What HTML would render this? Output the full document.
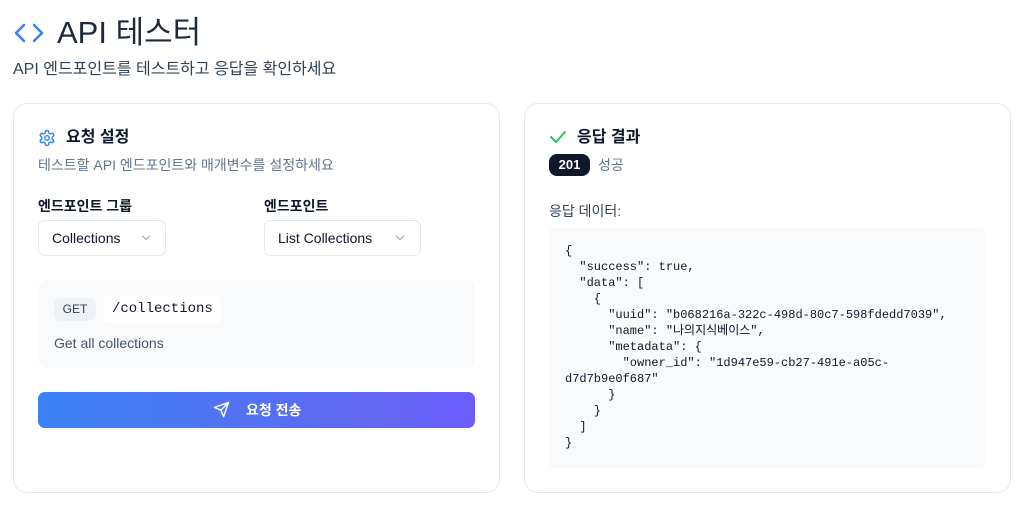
<!DOCTYPE html>
<html><head><meta charset="utf-8"><style>
*{box-sizing:border-box;margin:0;padding:0}
body{width:1027px;height:510px;background:#fff;font-family:"Liberation Sans","Noto Sans CJK KR",sans-serif;color:#0f172a;position:relative;overflow:hidden}
.abs{position:absolute}
.card{position:absolute;top:103px;width:487px;height:390px;border:1px solid #e2e8f0;border-radius:14px;background:#fff}
.sel{position:absolute;top:220px;height:36px;border:1px solid #e2e8f0;border-radius:7px;font-size:14px;line-height:34px;padding-left:13px;color:#0f172a}
.chev{position:absolute;top:12px;width:6px;height:6px;border-right:1.3px solid #94a3b8;border-bottom:1.3px solid #94a3b8;transform:rotate(45deg)}
pre{font-family:"Liberation Mono","Noto Sans CJK KR",monospace;font-size:12px;line-height:16px;color:#0f172a}
</style></head><body>
<svg class="abs" style="left:13px;top:20px" width="32" height="26" viewBox="0 0 32 26"><path d="M11 5 L3 13 L11 21 M21 5 L29 13 L21 21" fill="none" stroke="#3b82f6" stroke-width="2.6" stroke-linecap="round" stroke-linejoin="round"/></svg>
<div class="abs" style="left:57px;top:14px;font-size:31px;line-height:38px;color:#1e293b">API 테스터</div>
<div class="abs" style="left:13px;top:59px;font-size:16px;line-height:22px;color:#334155">API 엔드포인트를 테스트하고 응답을 확인하세요</div>

<div class="card" style="left:13px"></div>
<svg class="abs" style="left:38px;top:129px" width="18" height="18" viewBox="0 0 24 24" fill="none" stroke="#3b82f6" stroke-width="2" stroke-linecap="round" stroke-linejoin="round"><path d="M12.22 2h-.44a2 2 0 0 0-2 2v.18a2 2 0 0 1-1 1.73l-.43.25a2 2 0 0 1-2 0l-.15-.08a2 2 0 0 0-2.73.73l-.22.38a2 2 0 0 0 .73 2.730l.15.1a2 2 0 0 1 1 1.72v.51a2 2 0 0 1-1 1.74l-.15.09a2 2 0 0 0-.73 2.73l.22.38a2 2 0 0 0 2.73.73l.15-.08a2 2 0 0 1 2 0l.43.25a2 2 0 0 1 1 1.73V20a2 2 0 0 0 2 2h.44a2 2 0 0 0 2-2v-.18a2 2 0 0 1 1-1.73l.43-.25a2 2 0 0 1 2 0l.15.08a2 2 0 0 0 2.73-.73l.22-.39a2 2 0 0 0-.73-2.73l-.15-.08a2 2 0 0 1-1-1.74v-.5a2 2 0 0 1 1-1.74l.15-.09a2 2 0 0 0 .73-2.73l-.22-.38a2 2 0 0 0-2.73-.73l-.15.08a2 2 0 0 1-2 0l-.43-.25a2 2 0 0 1-1-1.73V4a2 2 0 0 0-2-2z"/><circle cx="12" cy="12" r="3"/></svg>
<div class="abs" style="left:66px;top:127px;font-size:16px;line-height:22px;font-weight:bold;color:#0f172a">요청 설정</div>
<div class="abs" style="left:38px;top:155px;font-size:14px;line-height:20px;color:#64748b">테스트할 API 엔드포인트와 매개변수를 설정하세요</div>
<div class="abs" style="left:38px;top:196px;font-size:14px;line-height:20px;font-weight:bold">엔드포인트 그룹</div>
<div class="abs" style="left:264px;top:196px;font-size:14px;line-height:20px;font-weight:bold">엔드포인트</div>
<div class="sel" style="left:38px;width:128px">Collections<span class="chev" style="left:104px"></span></div>
<div class="sel" style="left:264px;width:157px">List Collections<span class="chev" style="left:132px"></span></div>
<div class="abs" style="left:38px;top:280px;width:437px;height:88px;background:#f8fafc;border-radius:10px"></div>
<div class="abs" style="left:54px;top:298px;width:42px;height:23px;background:#eef2f7;border-radius:7px;font-size:12px;line-height:23px;text-align:center;color:#334155">GET</div>
<div class="abs" style="left:104px;top:296px;width:117px;height:27px;background:#fff;border-radius:4px;padding-left:8px"><pre style="font-size:14px;line-height:27px">/collections</pre></div>
<div class="abs" style="left:54px;top:333px;font-size:14px;line-height:20px;color:#475569">Get all collections</div>
<div class="abs" style="left:38px;top:392px;width:437px;height:36px;border-radius:7px;background:linear-gradient(90deg,#3b82f6,#6366f1 80%,#6a5cff)"></div>
<svg class="abs" style="left:213px;top:401px" width="17" height="17" viewBox="0 0 24 24" fill="none" stroke="#fff" stroke-width="2" stroke-linecap="round" stroke-linejoin="round"><path d="M22 2 11 13M22 2l-7 20-4-9-9-4z"/></svg>
<div class="abs" style="left:246px;top:400px;font-size:14px;line-height:20px;color:#fff;font-weight:bold">요청 전송</div>

<div class="card" style="left:524px"></div>
<svg class="abs" style="left:549px;top:129px" width="18" height="16" viewBox="0 0 18 16"><path d="M2 8 L7 13 L16 3" fill="none" stroke="#22c55e" stroke-width="2" stroke-linecap="round" stroke-linejoin="round"/></svg>
<div class="abs" style="left:577px;top:127px;font-size:16px;line-height:22px;font-weight:bold">응답 결과</div>
<div class="abs" style="left:549px;top:154px;width:41px;height:22px;background:#0f172a;border-radius:8px;color:#fff;font-size:13px;line-height:22px;text-align:center;font-weight:bold">201</div>
<div class="abs" style="left:598px;top:155px;font-size:14px;line-height:20px;color:#64748b">성공</div>
<div class="abs" style="left:549px;top:201px;font-size:14px;line-height:20px;color:#334155">응답 데이터:</div>
<div class="abs" style="left:549px;top:228px;width:437px;height:240px;background:#f8fafc;border-radius:5px;padding:15px 0 0 16px">
<pre>{
  "success": true,
  "data": [
    {
      "uuid": "b068216a-322c-498d-80c7-598fdedd7039",
      "name": "나의지식베이스",
      "metadata": {
        "owner_id": "1d947e59-cb27-491e-a05c-
d7d7b9e0f687"
      }
    }
  ]
}</pre></div>
</body></html>
